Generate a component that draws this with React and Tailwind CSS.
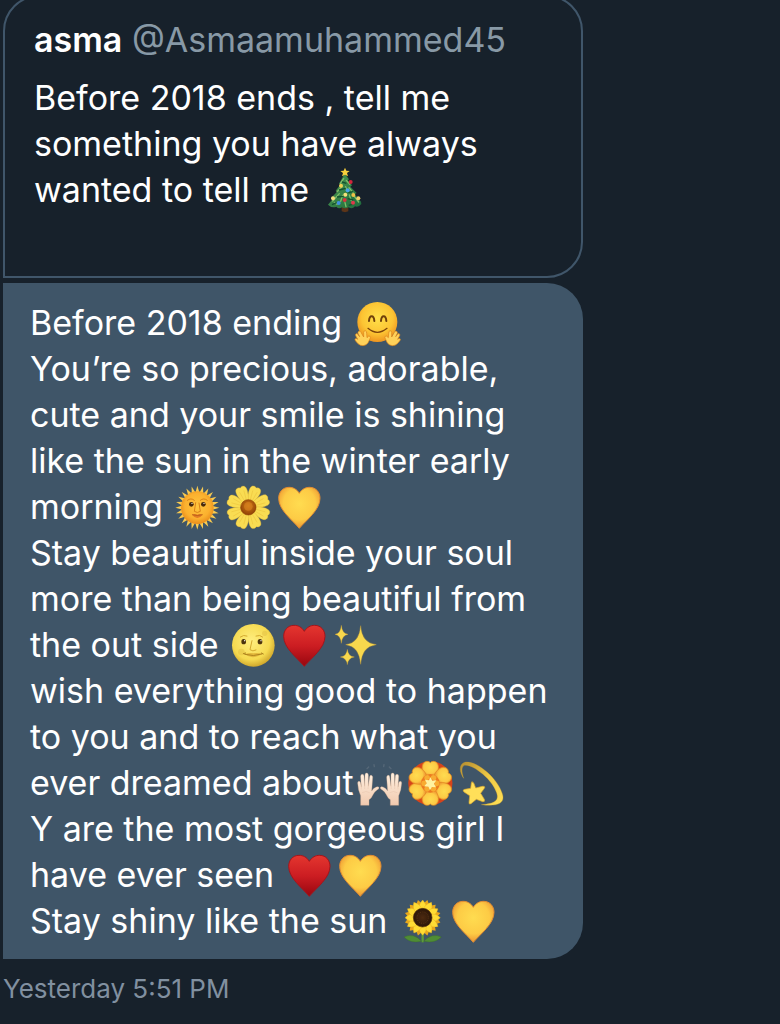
const spin = (count, start = 0) => Array.from({ length: count }, (_, i) => start + (i * 360) / count);

function Gradients() {
  return (
    <svg width="0" height="0" className="absolute" aria-hidden="true">
      <defs>
        <radialGradient id="face" cx="0.5" cy="0.4" r="0.6">
          <stop offset="0" stopColor="#ffe04a" />
          <stop offset="0.65" stopColor="#fcc433" />
          <stop offset="1" stopColor="#ee9420" />
        </radialGradient>
        <radialGradient id="moon" cx="0.45" cy="0.4" r="0.62">
          <stop offset="0" stopColor="#ffee80" />
          <stop offset="0.7" stopColor="#f6da50" />
          <stop offset="1" stopColor="#cda329" />
        </radialGradient>
        <radialGradient id="sun" cx="0.5" cy="0.45" r="0.55">
          <stop offset="0" stopColor="#ffc63e" />
          <stop offset="0.7" stopColor="#fbb02e" />
          <stop offset="1" stopColor="#e98d1c" />
        </radialGradient>
        <radialGradient id="gold" cx="0.5" cy="0.4" r="0.65">
          <stop offset="0" stopColor="#ffdc50" />
          <stop offset="0.6" stopColor="#fdcb45" />
          <stop offset="1" stopColor="#e98a2e" />
        </radialGradient>
        <linearGradient id="red" x1="0" y1="0" x2="0" y2="1">
          <stop offset="0" stopColor="#e4362f" />
          <stop offset="0.5" stopColor="#cc1d22" />
          <stop offset="1" stopColor="#98060f" />
        </linearGradient>
        <radialGradient id="core" cx="0.5" cy="0.4" r="0.6">
          <stop offset="0" stopColor="#d27a17" />
          <stop offset="1" stopColor="#8f4106" />
        </radialGradient>
        <radialGradient id="seed">
          <stop offset="0" stopColor="#4d2a10" />
          <stop offset="1" stopColor="#2b1608" />
        </radialGradient>
        <linearGradient id="skin" x1="0" y1="0" x2="0" y2="1">
          <stop offset="0" stopColor="#fff0e0" />
          <stop offset="1" stopColor="#f0c9ae" />
        </linearGradient>
        <linearGradient id="trail" x1="0" y1="0" x2="1" y2="1">
          <stop offset="0" stopColor="#b58e32" />
          <stop offset="0.5" stopColor="#f0cb45" />
          <stop offset="1" stopColor="#ffe056" />
        </linearGradient>
        <linearGradient id="pine" x1="0" y1="0" x2="1" y2="1">
          <stop offset="0" stopColor="#4f9a52" />
          <stop offset="1" stopColor="#1d6a3c" />
        </linearGradient>
      </defs>
    </svg>
  );
}

function Emoji({ label, children }) {
  return (
    <svg
      role="img"
      aria-label={label}
      viewBox="0 0 129 129"
      className="mx-1 inline-block h-[43px] w-[43px] overflow-visible align-[-10px]"
    >
      {children}
    </svg>
  );
}

function Tree() {
  const baubles = [
    [83, 39, '#d2263c'], [54, 50, '#f0cf52'], [74, 64, '#4aa3e8'], [67, 77, '#f6e27a'],
    [91, 78, '#efc347'], [30, 88, '#f3dc7c'], [65, 93, '#d7333d'], [47, 102, '#3f8fe0'],
    [90, 101, '#e03a4b'], [106, 88, '#f0d069'],
  ];
  return (
    <Emoji label="Christmas tree">
      <path d="M56 108h20v19q-10 5-20 0z" fill="#5b3418" />
      <path
        d="M65 14L78 31 74 34 87 49 82 53 101 72 95 76 114 98 115 105Q105 117 96 112 88 122 77 115 66 121 57 115 47 121 40 113 27 119 15 107L31 88 24 87 44 67 38 65 53 46 48 44Z"
        fill="url(#pine)"
      />
      <path
        d="M62 29L52 43M70 34l10 12M57 53L42 68M68 53l5 13M78 56l12 15M49 74L29 96M59 79l-6 18M79 78l6 17M94 82l13 17M66 101l3 12M34 100l8 6"
        stroke="#81bd68"
        strokeWidth="4"
        strokeLinecap="round"
      />
      <path d="M57 39l13 4M48 63l20-5M76 71l14-3M42 84l20-2M74 89l17 4M27 107l14-6M77 109l14-4" stroke="#14532f" strokeWidth="4" />
      {baubles.map(([x, y, color]) => (
        <circle key={`${x}-${y}`} cx={x} cy={y} r="6" fill={color} />
      ))}
      <path d="M66-4l4 9 10 1-8 6 3 10-9-5-9 5 3-10-8-6 10-1z" fill="#f8cf3c" />
    </Emoji>
  );
}

function HuggingHand() {
  return (
    <path
      d="M8 88q4-3 7 3l8 14 0-14q1-6 5-5 4 1 4 8l1 13q5-7 9-4 3 2 0 7l-5 11q-6 10-16 10-9 0-15-6L-1 117q-4-4-1-7 3-2 7 2l-6-11q-2-5 2-6 3-1 6 4l4 5-5-10q-1-4 2-6z"
      fill="#ffd25a"
      stroke="#dc8418"
      strokeWidth="2"
    />
  );
}

function Hug() {
  return (
    <Emoji label="Hugging face">
      <circle cx="64" cy="60" r="60" fill="url(#face)" />
      <path d="M39 57q1-14 8-14t8 14M75 57q1-14 8-14t8 14" fill="none" stroke="#70400b" strokeWidth="6" strokeLinecap="round" />
      <path d="M36 79q28 24 57 0" fill="none" stroke="#7b430b" strokeWidth="4" strokeLinecap="round" />
      <HuggingHand />
      <g transform="matrix(-1 0 0 1 130 0)">
        <HuggingHand />
      </g>
    </Emoji>
  );
}

function Sun() {
  return (
    <Emoji label="Sun with face">
      {spin(24).map((a) => (
        <path key={a} d="M58 22L64-1l7 23z" fill="#f8ca50" transform={`rotate(${a} 64 65)`} />
      ))}
      <circle cx="64" cy="65" r="49" fill="url(#sun)" />
      <path d="M34 43q11-9 21 0M73 43q10-9 21 0M59 50l-4 26q9 7 18 0l-4-25" fill="none" stroke="#d98219" strokeWidth="3" strokeLinecap="round" />
      <ellipse cx="46" cy="55" rx="7" ry="7" fill="#4a2b0b" />
      <ellipse cx="82" cy="55" rx="7" ry="7" fill="#4a2b0b" />
      <circle cx="48" cy="52" r="2" fill="#fff" />
      <circle cx="84" cy="52" r="2" fill="#fff" />
      <path d="M48 86q8-4 16 0 8-4 16 0-8 10-16 10t-16-10z" fill="#e27a26" />
      <path d="M48 86q16 5 32 0" stroke="#a85612" strokeWidth="2" fill="none" />
    </Emoji>
  );
}

function Moon() {
  return (
    <Emoji label="Full moon with face">
      <circle cx="64" cy="64" r="64" fill="url(#moon)" />
      <circle cx="28" cy="84" r="10" fill="#e6c447" opacity="0.6" />
      <circle cx="98" cy="28" r="8" fill="#e6c447" opacity="0.6" />
      <path d="M25 39q10-8 20-3M72 36q12-5 20 3M60 50l-6 27q8 7 18 1" fill="none" stroke="#d4a92e" strokeWidth="3" strokeLinecap="round" />
      <ellipse cx="35" cy="53" rx="7" ry="8" fill="#4b320d" />
      <circle cx="38" cy="50" r="2" fill="#fff" />
      <ellipse cx="84" cy="53" rx="7" ry="8" fill="#4b320d" />
      <circle cx="87" cy="50" r="2" fill="#fff" />
      <path d="M38 91q24 18 52-1-13-5-25-2-13-3-27 3z" fill="#e3b83c" />
      <path d="M38 91q26 8 52-1M34 89l7-2M88 87l6 3" fill="none" stroke="#af831e" strokeWidth="3" strokeLinecap="round" />
    </Emoji>
  );
}

function Daisy() {
  return (
    <Emoji label="Blossom">
      {spin(8, 22.5).map((a) => (
        <g key={a} transform={`rotate(${a} 64 64)`}>
          <path d="M57 50C46 30 43 5 51 0q7-4 13 1 7-5 13 0c8 7 2 30-7 49z" fill="#f9dc52" stroke="#dfb132" strokeWidth="1" />
          <path d="M61 42L57 12M67 42l4-30" stroke="#e3b42d" strokeWidth="1" />
        </g>
      ))}
      <circle cx="64" cy="64" r="23" fill="url(#core)" stroke="#8f4206" strokeWidth="2" />
      <circle cx="64" cy="61" r="13" fill="#d88320" opacity="0.6" />
    </Emoji>
  );
}

function Heart({ label, fill, edge }) {
  return (
    <Emoji label={label}>
      <path
        d="M64 22C56 9 45 4 33 4 14 4 2 19 2 37c0 35 40 64 62 90 22-26 62-55 62-90C126 19 114 4 95 4 83 4 72 9 64 22z"
        fill={fill}
        stroke={edge}
        strokeWidth="3"
      />
    </Emoji>
  );
}

const RedHeart = () => <Heart label="Red heart" fill="url(#red)" edge="#a3151b" />;
const YellowHeart = () => <Heart label="Yellow heart" fill="url(#gold)" edge="#e28c32" />;

function Sparkles() {
  return (
    <Emoji label="Sparkles">
      <g fill="#f8d84d" stroke="#dba72d" strokeWidth="1">
        <path d="M80 5q3 52 47 57-44 5-47 59-4-54-45-59 41-5 45-57z" />
        <path d="M22 4q2 25 20 27-18 3-20 27-2-24-19-27 17-2 19-27z" />
        <path d="M40 76q2 21 21 23-19 3-21 23-2-20-21-23 19-2 21-23z" />
      </g>
    </Emoji>
  );
}

function RaisedHand() {
  return (
    <>
      <path
        d="M8 130V101q-8-17-9-38 0-5 4-5t5 5l2 13-2-33q0-6 5-6t5 6l2 30 1-34q0-6 5-6t5 6v34l4-29q1-5 5-4t4 6l-3 41q5-9 14-12 7-2 8 2 0 4-5 6-8 5-13 15-4 10-12 15v17z"
        fill="url(#skin)"
        stroke="#d5aa8d"
        strokeWidth="1"
      />
      <path d="M10 77v5M20 73v8M31 73l-1 8M12 92q12-7 23 0" fill="none" stroke="#dfb9a0" strokeWidth="1" />
    </>
  );
}

function RaisedHands() {
  return (
    <Emoji label="Raising hands">
      <path d="M27 20l5-5M49 14l-1-6M77 14l1-6M99 20l-5-5" stroke="#566878" strokeWidth="4" strokeLinecap="round" />
      <RaisedHand />
      <g transform="matrix(-1 0 0 1 130 0)">
        <RaisedHand />
      </g>
    </Emoji>
  );
}

function Rosette() {
  return (
    <Emoji label="Rosette">
      {spin(6, 30).map((a) => (
        <path key={a} d="M45 47Q30 1 52-1q12-3 24 0 22 2 7 48z" fill="#d6441b" transform={`rotate(${a} 64 64)`} />
      ))}
      {spin(6).map((a) => (
        <path
          key={a}
          d="M49 43C32 19 40-2 54-2q7 0 10 4 3-4 10-4c14 0 22 21 5 45z"
          fill="url(#gold)"
          stroke="#e38820"
          strokeWidth="2"
          transform={`rotate(${a} 64 64)`}
        />
      ))}
      <circle cx="64" cy="64" r="28" fill="#ec7b20" />
      {spin(6, 30).map((a) => (
        <path key={a} d="M56 51q-3-14 8-14t8 14z" fill="#f8ac31" transform={`rotate(${a} 64 64)`} />
      ))}
      <path d="M64 46l6 10 12-1-7 10 6 11-12-1-6 9-5-10-12-1 7-9-5-11 12 2z" fill="#fff2a1" />
    </Emoji>
  );
}

function Dizzy() {
  return (
    <Emoji label="Dizzy">
      <path
        d="M11 49C-3 28-3 7 14 1c34-7 97 45 113 94 9 27-10 40-63 33 42-3 53-13 46-35C98 52 36 4 13 10 4 14 4 29 11 49z"
        fill="url(#trail)"
        stroke="#c89a2c"
        strokeWidth="1"
      />
      <path
        d="M35 60q5-1 7 5l5 13 20-5q10-1 6 6L62 94l11 18q3 8-5 7l-19-7-16 13q-7 4-6-4l2-20-17-11q-6-6 2-8l18-3 2-15q0-4 3-4z"
        fill="#ffdf59"
        stroke="#d9a72e"
        strokeWidth="2"
      />
    </Emoji>
  );
}

function Sunflower() {
  return (
    <Emoji label="Sunflower">
      <path d="M65 95v32" stroke="#5d9b3a" strokeWidth="7" />
      <path d="M62 124Q38 98 9 111q18 20 53 13zM68 124q24-26 53-13-18 20-53 13z" fill="#4f8c35" stroke="#386b25" strokeWidth="1" />
      {spin(12, 15).map((a) => (
        <path key={a} d="M54 31Q53 12 65-2q12 14 11 33z" fill="#e9a81c" transform={`rotate(${a} 65 53)`} />
      ))}
      {spin(12).map((a) => (
        <path key={a} d="M54 31Q51 13 65 0q14 13 11 31z" fill="#ffdc34" stroke="#e1a51e" strokeWidth="1" transform={`rotate(${a} 65 53)`} />
      ))}
      <circle cx="65" cy="53" r="28" fill="url(#seed)" stroke="#55300d" strokeWidth="2" />
      <circle cx="65" cy="53" r="17" fill="none" stroke="#6b431a" strokeWidth="2" strokeDasharray="3 4" />
    </Emoji>
  );
}

function QuotedTweet() {
  return (
    <article className="-mt-[5px] rounded-[36px] rounded-bl-none border-2 border-[#40566a] pt-5 pr-6 pb-[63px] pl-[29px]">
      <header className="mb-3">
        <a href="#profile" className="text-[#8899a6]">
          <span className="font-semibold text-white">asma</span> @Asmaamuhammed45
        </a>
      </header>
      <p>
        Before 2018 ends , tell me something you have always wanted to tell me <Tree />
      </p>
    </article>
  );
}

function Reply() {
  return (
    <div className="mt-[5px] rounded-r-[36px] bg-[#3f5568] pt-[17px] pr-6 pb-[15px] pl-[27px]">
      <p>Before 2018 ending <Hug /></p>
      <p>
        You’re so precious, adorable, cute and your smile is shining like the sun in the winter early morning{' '}
        <Sun /><Daisy /><YellowHeart />
      </p>
      <p>
        Stay beautiful inside your soul more than being beautiful from the out side{' '}
        <Moon /><RedHeart /><Sparkles />
      </p>
      <p>
        wish everything good to happen to you and to reach what you ever dreamed about
        <RaisedHands /><Rosette /><Dizzy />
      </p>
      <p>
        Y are the most gorgeous girl I have ever seen <RedHeart /><YellowHeart />
      </p>
      <p>Stay shiny like the sun <Sunflower /><YellowHeart /></p>
    </div>
  );
}

export default function App() {
  return (
    <main className="flow-root min-h-screen bg-[#17212b] px-[3px] font-['Inter',sans-serif] text-[34px] leading-[46px] text-white">
      <Gradients />
      <section className="w-full max-w-[580px]">
        <QuotedTweet />
        <Reply />
      </section>
      <time className="mt-3 block text-[26px] leading-9 text-[#8190a0]">Yesterday 5:51 PM</time>
    </main>
  );
}
